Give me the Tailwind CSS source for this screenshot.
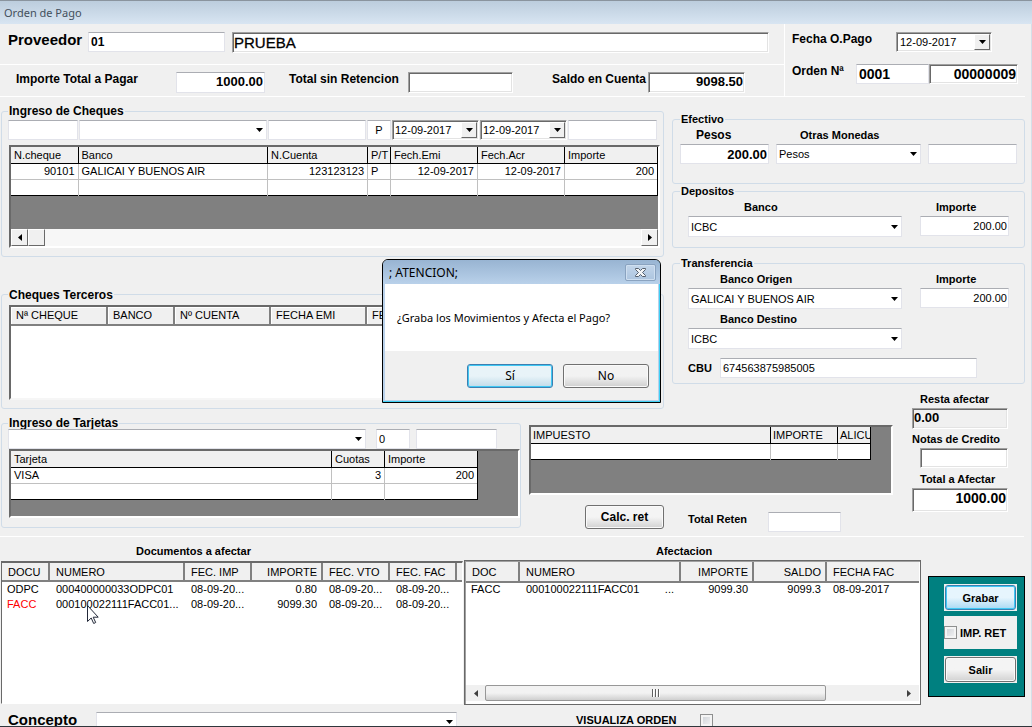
<!DOCTYPE html>
<html lang="es">
<head>
<meta charset="utf-8">
<meta name="viewport" content="width=device-width, initial-scale=1">
<title>Orden de Pago</title>
<script src="https://cdn.jsdelivr.net/npm/@tailwindcss/browser@4"></script>
</head>
<body class="relative flex h-screen flex-col overflow-hidden bg-[#f0f0f0] font-['Liberation_Sans',Arial,sans-serif] text-[11px] leading-3 text-black">

<header class="h-6 shrink-0 border-t border-[#8a949e] bg-linear-to-b from-[#bccddd] to-[#d8e5f2] pl-1 font-['Noto_Sans',sans-serif]">
  <h1 class="text-[11px] leading-6 text-[#44505c]">Orden de Pago</h1>
</header>

<main class="flex min-h-0 flex-1 flex-col border-r border-[#d5dfe8]">

  <!-- Encabezado de la orden -->
  <section class="mr-1.5 flex h-[73px] shrink-0 border-b border-white text-xs font-bold">
    <div class="flex flex-1 flex-col border-r border-white">
      <div class="flex h-[41px] items-start border-b border-white pt-2 pl-2">
        <label for="prov" class="w-20 text-[15px] leading-4">Proveedor</label>
        <input id="prov" value="01" class="h-5 w-[137px] border border-[#e2e3ea] border-t-[#abadb3] bg-white px-0.5">
        <input aria-label="Nombre del proveedor" value="PRUEBA" class="mr-[15px] ml-[7px] h-[21px] min-w-0 flex-1 border border-t-[#a0a0a0] border-r-white border-b-white border-l-[#a0a0a0] bg-white px-px text-[15px] font-normal shadow-[inset_1px_1px_#696969,inset_-1px_-1px_#e3e3e3] [-webkit-text-stroke:0.3px]">
      </div>
      <div class="flex items-start pt-[7px] pl-4">
        <label for="total" class="w-40 leading-[14px]">Importe Total a Pagar</label>
        <input id="total" value="1000.00" class="h-[21px] w-[89px] border border-[#e2e3ea] border-t-[#abadb3] bg-white px-px pb-0.5 text-right text-[13px]">
        <label for="sinret" class="ml-6 w-[119px] leading-[14px]">Total sin Retencion</label>
        <input id="sinret" class="h-[21px] w-[105px] border border-t-[#a0a0a0] border-r-white border-b-white border-l-[#a0a0a0] bg-white px-0.5 shadow-[inset_1px_1px_#696969,inset_-1px_-1px_#e3e3e3]">
        <label for="saldo" class="ml-[39px] w-24 leading-[14px]">Saldo en Cuenta</label>
        <input id="saldo" value="9098.50" class="h-[21px] w-[97px] border border-t-[#a0a0a0] border-r-white border-b-white border-l-[#a0a0a0] bg-white px-px pb-0.5 text-right text-[13px] shadow-[inset_1px_1px_#696969,inset_-1px_-1px_#e3e3e3]">
      </div>
    </div>
    <div class="w-60 pt-2 pr-[7px] pl-[7px]">
      <div class="flex h-8 items-start">
        <label for="fecha" class="w-[104px] leading-[14px]">Fecha O.Pago</label>
        <div class="flex h-5 w-24 border border-t-[#a0a0a0] border-r-white border-b-white border-l-[#a0a0a0] bg-white p-px shadow-[inset_1px_1px_#696969,inset_-1px_-1px_#e3e3e3]">
          <input id="fecha" value="12-09-2017" class="min-w-0 flex-1 pl-0.5 text-[11px] font-normal">
          <button aria-label="Abrir calendario" class="flex w-4 items-center justify-center border border-white border-r-[#696969] border-b-[#696969] bg-[#f0f0f0]"><svg class="h-1 w-[7px]" viewBox="0 0 7 4"><path d="M0 0h7L3.500 4z"/></svg></button>
        </div>
      </div>
      <div class="flex items-start">
        <label for="ord" class="w-16 leading-[14px]">Orden Nª</label>
        <input id="ord" value="0001" class="h-5 w-[73px] border border-[#e2e3ea] border-t-[#abadb3] bg-white px-0.5 text-sm">
        <input aria-label="Número de orden" value="00000009" class="h-5 min-w-0 flex-1 border border-t-[#a0a0a0] border-r-white border-b-white border-l-[#a0a0a0] bg-white px-px text-right text-sm shadow-[inset_1px_1px_#696969,inset_-1px_-1px_#e3e3e3]">
      </div>
    </div>
  </section>

  <!-- Medios de pago -->
  <section class="flex h-[312px] shrink-0 pr-1.5">
    <div class="mr-2 min-w-0 flex-1 pt-2 pl-px">
      <fieldset class="min-w-0 rounded-[3px] border border-[#d0dce8] px-1.5 pb-2">
        <legend class="px-px text-xs leading-3 font-bold">Ingreso de Cheques</legend>
        <div class="flex gap-px pt-[3px]">
          <input aria-label="N.cheque" class="h-5 w-[70px] border border-[#e2e3ea] border-t-[#abadb3] bg-white px-0.5">
          <div class="relative min-w-0 flex-1">
            <select aria-label="Banco del cheque" class="h-5 w-full appearance-none border border-[#e2e3ea] border-t-[#abadb3] bg-white px-0.5"><option></option></select>
            <svg class="pointer-events-none absolute top-2 right-1 h-1 w-[7px]" viewBox="0 0 7 4"><path d="M0 0h7L3.500 4z"/></svg>
          </div>
          <input aria-label="N.Cuenta" class="h-5 w-[98px] border border-[#e2e3ea] border-t-[#abadb3] bg-white px-0.5">
          <input aria-label="P/T" value="P" class="h-5 w-6 border border-[#e2e3ea] border-t-[#abadb3] bg-white text-center">
          <div class="flex h-5 w-[87px] border border-t-[#a0a0a0] border-r-white border-b-white border-l-[#a0a0a0] bg-white p-px shadow-[inset_1px_1px_#696969,inset_-1px_-1px_#e3e3e3]">
            <input aria-label="Fecha de emisión" value="12-09-2017" class="min-w-0 flex-1 pl-px">
            <button aria-label="Abrir calendario de emisión" class="flex w-4 items-center justify-center border border-white border-r-[#696969] border-b-[#696969] bg-[#f0f0f0]"><svg class="h-1 w-[7px]" viewBox="0 0 7 4"><path d="M0 0h7L3.500 4z"/></svg></button>
          </div>
          <div class="flex h-5 w-[87px] border border-t-[#a0a0a0] border-r-white border-b-white border-l-[#a0a0a0] bg-white p-px shadow-[inset_1px_1px_#696969,inset_-1px_-1px_#e3e3e3]">
            <input aria-label="Fecha de acreditación" value="12-09-2017" class="min-w-0 flex-1 pl-px">
            <button aria-label="Abrir calendario de acreditación" class="flex w-4 items-center justify-center border border-white border-r-[#696969] border-b-[#696969] bg-[#f0f0f0]"><svg class="h-1 w-[7px]" viewBox="0 0 7 4"><path d="M0 0h7L3.500 4z"/></svg></button>
          </div>
          <input aria-label="Importe del cheque" class="h-5 w-[89px] border border-[#e2e3ea] border-t-[#abadb3] bg-white px-0.5">
        </div>
        <div class="mt-[5px] -mr-[3px] ml-px border-2 border-[#696969] border-r-white border-b-white bg-[#808080]">
          <table class="w-full table-fixed border-collapse bg-white text-left">
            <colgroup><col class="w-[67px]"><col><col class="w-[100px]"><col class="w-[23px]"><col class="w-[87px]"><col class="w-[87px]"><col class="w-[93px]"></colgroup>
            <thead class="bg-[#f0f0f0]">
              <tr class="h-4 border-b border-black [&>th]:overflow-hidden [&>th]:border-r [&>th]:border-black [&>th]:pl-[3px] [&>th]:font-normal [&>th]:whitespace-nowrap">
                <th>N.cheque</th><th>Banco</th><th>N.Cuenta</th><th>P/T</th><th>Fech.Emi</th><th>Fech.Acr</th><th>Importe</th>
              </tr>
            </thead>
            <tbody class="[&_td]:border-r [&_td]:border-[#c0c0c0] [&_td]:px-[3px] [&_td]:whitespace-nowrap [&_td:last-child]:border-black">
              <tr class="h-4 border-b border-[#c0c0c0]"><td class="text-right">90101</td><td>GALICAI Y BUENOS AIR</td><td class="text-right">123123123</td><td>P</td><td class="text-right">12-09-2017</td><td class="text-right">12-09-2017</td><td class="text-right">200</td></tr>
              <tr class="h-4 border-b border-black"><td></td><td></td><td></td><td></td><td></td><td></td><td></td></tr>
            </tbody>
          </table>
          <div class="mt-[33px] flex h-[17px] justify-between bg-[#f7f7f7]">
            <div class="flex">
              <button aria-label="Desplazar a la izquierda" class="flex w-[17px] items-center justify-center border border-white border-r-[#696969] border-b-[#696969] bg-[#f0f0f0]"><svg class="h-[7px] w-1" viewBox="0 0 4 7"><path d="M4 0v7L0 3.500z"/></svg></button>
              <div class="w-[17px] border border-white border-r-[#696969] border-b-[#696969] bg-[#f0f0f0]"></div>
            </div>
            <button aria-label="Desplazar a la derecha" class="flex w-[17px] items-center justify-center border border-white border-r-[#696969] border-b-[#696969] bg-[#f0f0f0]"><svg class="h-[7px] w-1" viewBox="0 0 4 7"><path d="M0 0v7l4-3.500z"/></svg></button>
          </div>
        </div>
      </fieldset>

      <fieldset class="mt-8 min-w-0 rounded-[3px] border border-[#d0dce8] px-1.5 pb-2">
        <legend class="px-px text-xs leading-3 font-bold">Cheques Terceros</legend>
        <div class="mt-1 ml-px h-[95px] border-2 border-t-[#696969] border-r-white border-b-[#f6f6f6] border-l-[#696969] bg-white">
          <table class="w-full table-fixed border-collapse bg-[#f0f0f0] text-left">
            <colgroup><col class="w-24"><col class="w-[67px]"><col class="w-24"><col class="w-24"><col></colgroup>
            <thead><tr class="h-[18px] border-b-2 border-[#808080] [&>th]:border-r-2 [&>th]:border-[#808080] [&>th]:pl-[5px] [&>th]:font-normal [&>th]:shadow-[inset_1px_1px_white]">
              <th>Nª CHEQUE</th><th>BANCO</th><th>Nº CUENTA</th><th>FECHA EMI</th><th>FE</th>
            </tr></thead>
          </table>
        </div>
      </fieldset>
    </div>

    <div class="w-[353px] shrink-0 pt-4">
      <fieldset class="min-w-0 rounded-[3px] border border-[#d0dce8] pt-1 pr-[7px] pb-[19px] pl-[7px]">
        <legend class="px-px text-[11px] leading-3 font-bold">Efectivo</legend>
        <div class="flex gap-[7px]">
          <div class="w-[89px]">
            <label for="pesos" class="mb-[3px] ml-4 block text-xs leading-3 font-bold">Pesos</label>
            <input id="pesos" value="200.00" class="block h-5 w-full border border-[#e2e3ea] border-t-[#abadb3] bg-white px-px text-right text-[13px] font-bold">
          </div>
          <div class="relative min-w-0 flex-1">
            <label for="otras" class="mb-[3px] ml-6 block text-[11px] leading-3 font-bold">Otras Monedas</label>
            <select id="otras" class="block h-5 w-full appearance-none border border-[#e2e3ea] border-t-[#abadb3] bg-white px-0.5"><option>Pesos</option></select>
            <svg class="pointer-events-none absolute right-1 bottom-2 h-1 w-[7px]" viewBox="0 0 7 4"><path d="M0 0h7L3.500 4z"/></svg>
          </div>
          <input aria-label="Importe en otra moneda" class="mt-[15px] h-5 w-[89px] border border-[#e2e3ea] border-t-[#abadb3] bg-white px-0.5">
        </div>
      </fieldset>

      <fieldset class="mt-px min-w-0 rounded-[3px] border border-[#d0dce8] pt-1 pr-[15px] pb-[10px] pl-[15px]">
        <legend class="-ml-2 px-px text-[11px] leading-3 font-bold">Depositos</legend>
        <div class="flex justify-between gap-[18px]">
          <div class="relative min-w-0 flex-1">
            <label for="depb" class="mb-[3px] ml-14 block text-[11px] leading-3 font-bold">Banco</label>
            <select id="depb" class="block h-[21px] w-full appearance-none border border-[#e2e3ea] border-t-[#abadb3] bg-white px-0.5"><option>ICBC</option></select>
            <svg class="pointer-events-none absolute right-1 bottom-2 h-1 w-[7px]" viewBox="0 0 7 4"><path d="M0 0h7L3.500 4z"/></svg>
          </div>
          <div class="w-[89px]">
            <label for="depi" class="mb-[3px] ml-4 block text-[11px] leading-3 font-bold">Importe</label>
            <input id="depi" value="200.00" class="block h-5 w-full border border-[#e2e3ea] border-t-[#abadb3] bg-white px-px text-right">
          </div>
        </div>
      </fieldset>

      <fieldset class="mt-[9px] min-w-0 rounded-[3px] border border-[#d0dce8] pt-1 pr-[15px] pb-[5px] pl-[15px]">
        <legend class="-ml-2 px-px text-[11px] leading-3 font-bold">Transferencia</legend>
        <div class="flex justify-between gap-[18px]">
          <div class="min-w-0 flex-1">
            <div class="relative">
              <label for="orig" class="mb-[3px] ml-8 block text-[11px] leading-3 font-bold">Banco Origen</label>
              <select id="orig" class="block h-[21px] w-full appearance-none border border-[#e2e3ea] border-t-[#abadb3] bg-white px-0.5"><option>GALICAI Y BUENOS AIR</option></select>
              <svg class="pointer-events-none absolute right-1 bottom-2 h-1 w-[7px]" viewBox="0 0 7 4"><path d="M0 0h7L3.500 4z"/></svg>
            </div>
            <div class="relative mt-1">
              <label for="dest" class="mb-[3px] ml-8 block text-[11px] leading-3 font-bold">Banco Destino</label>
              <select id="dest" class="block h-[21px] w-full appearance-none border border-[#e2e3ea] border-t-[#abadb3] bg-white px-0.5"><option>ICBC</option></select>
              <svg class="pointer-events-none absolute right-1 bottom-2 h-1 w-[7px]" viewBox="0 0 7 4"><path d="M0 0h7L3.500 4z"/></svg>
            </div>
          </div>
          <div class="w-[89px]">
            <label for="tri" class="mb-[3px] ml-4 block text-[11px] leading-3 font-bold">Importe</label>
            <input id="tri" value="200.00" class="block h-5 w-full border border-[#e2e3ea] border-t-[#abadb3] bg-white px-px text-right">
          </div>
        </div>
        <div class="mt-[9px] flex items-center">
          <label for="cbu" class="w-8 text-[11px] font-bold">CBU</label>
          <input id="cbu" value="674563875985005" class="mr-8 h-5 min-w-0 flex-1 border border-[#e2e3ea] border-t-[#abadb3] bg-white px-0.5">
        </div>
      </fieldset>
    </div>
  </section>

  <!-- Tarjetas, impuestos y totales -->
  <section class="mr-[7px] flex h-32 shrink-0 border-b border-white pl-px">
    <fieldset class="mt-2 mb-2 min-w-0 flex-1 rounded-[3px] border border-[#d0dce8] pl-1.5">
      <legend class="px-px text-xs leading-3 font-bold">Ingreso de Tarjetas</legend>
      <div class="flex">
        <div class="relative min-w-0 flex-1">
          <select aria-label="Tarjeta" class="block h-5 w-full appearance-none border border-[#e2e3ea] border-t-[#abadb3] bg-white px-0.5"><option></option></select>
          <svg class="pointer-events-none absolute top-2 right-1 h-1 w-[7px]" viewBox="0 0 7 4"><path d="M0 0h7L3.500 4z"/></svg>
        </div>
        <input aria-label="Cuotas" value="0" class="ml-[10px] h-5 w-[34px] border border-[#e2e3ea] border-t-[#abadb3] bg-white px-0.5">
        <input aria-label="Importe de la tarjeta" class="mr-[23px] ml-1.5 h-5 w-[81px] border border-[#e2e3ea] border-t-[#abadb3] bg-white px-0.5">
      </div>
      <div class="ml-px h-[69px] border-2 border-[#696969] border-r-white border-b-white bg-[#808080] pr-10">
        <table class="w-full table-fixed border-collapse bg-white text-left">
          <colgroup><col><col class="w-[53px]"><col class="w-[93px]"></colgroup>
          <thead class="bg-[#f0f0f0]">
            <tr class="h-4 border-b border-black [&>th]:border-r [&>th]:border-black [&>th]:pl-[3px] [&>th]:font-normal"><th>Tarjeta</th><th>Cuotas</th><th>Importe</th></tr>
          </thead>
          <tbody class="[&_td]:border-r [&_td]:border-[#c0c0c0] [&_td]:px-[3px] [&_td:last-child]:border-black">
            <tr class="h-4 border-b border-[#c0c0c0]"><td>VISA</td><td class="text-right">3</td><td class="text-right">200</td></tr>
            <tr class="h-4 border-b border-black"><td></td><td></td><td></td></tr>
          </tbody>
        </table>
      </div>
    </fieldset>

    <div class="mt-4 ml-2 w-[364px]">
      <div class="h-[70px] border-2 border-[#696969] border-r-white border-b-white bg-[#808080] pr-5">
        <table class="w-full table-fixed border-collapse bg-white text-left">
          <colgroup><col><col class="w-[67px]"><col class="w-[33px]"></colgroup>
          <thead class="bg-[#f0f0f0]">
            <tr class="h-4 border-b border-black [&>th]:overflow-hidden [&>th]:border-r [&>th]:border-black [&>th]:pl-0.5 [&>th]:font-normal"><th>IMPUESTO</th><th>IMPORTE</th><th>ALICU</th></tr>
          </thead>
          <tbody class="[&_td]:border-r [&_td]:border-[#c0c0c0] [&_td:last-child]:border-black">
            <tr class="h-4 border-b border-black"><td></td><td></td><td></td></tr>
          </tbody>
        </table>
      </div>
      <div class="mt-[10px] flex items-start pl-14">
        <button class="h-6 w-[79px] rounded-[3px] border border-[#707070] bg-linear-to-b from-[#f4f4f4] from-50% to-[#d2d2d2] text-xs font-bold shadow-[inset_0_0_0_1px_#fafafa]">Calc. ret</button>
        <label for="reten" class="mt-2 ml-6 w-20 text-[11px] leading-3 font-bold whitespace-nowrap">Total Reten</label>
        <input id="reten" class="mt-[7px] h-5 w-[73px] border border-[#e2e3ea] border-t-[#abadb3] bg-white px-0.5">
      </div>
    </div>

    <div class="-mt-4 mr-4 ml-[19px] flex w-24 flex-col font-bold">
      <label for="resta" class="ml-2 leading-3">Resta afectar</label>
      <input id="resta" value="0.00" class="mt-[3px] h-[21px] w-full border border-t-[#a0a0a0] border-r-white border-b-white border-l-[#a0a0a0] bg-[#f0f0f0] px-px pb-0.5 text-[13px] shadow-[inset_1px_1px_#696969,inset_-1px_-1px_#e3e3e3]">
      <label for="notas" class="mt-1 leading-3 whitespace-nowrap">Notas de Credito</label>
      <input id="notas" class="mt-[3px] ml-2 h-5 border border-t-[#a0a0a0] border-r-white border-b-white border-l-[#a0a0a0] bg-white px-px shadow-[inset_1px_1px_#696969,inset_-1px_-1px_#e3e3e3]">
      <label for="afec" class="mt-[5px] ml-2 leading-3 whitespace-nowrap">Total a Afectar</label>
      <input id="afec" value="1000.00" class="mt-[3px] h-6 w-full border border-t-[#a0a0a0] border-r-white border-b-white border-l-[#a0a0a0] bg-white px-px pb-1 text-right text-sm shadow-[inset_1px_1px_#696969,inset_-1px_-1px_#e3e3e3]">
    </div>
  </section>

  <!-- Documentos -->
  <section class="flex h-[168px] shrink-0 pt-2 pr-1.5 pl-px">
    <div class="min-w-0 flex-1">
      <h2 class="pl-[135px] text-[11px] leading-3 font-bold">Documentos a afectar</h2>
      <div class="mt-1 h-[143px] overflow-hidden border border-t-2 border-[#696969] border-r-white border-b-white bg-white">
        <table class="w-full table-fixed border-collapse text-left">
          <colgroup><col class="w-[47px]"><col><col class="w-[67px]"><col class="w-[71px]"><col class="w-[67px]"><col class="w-[67px]"><col class="w-[6px]"></colgroup>
          <thead class="bg-[#f0f0f0]">
            <tr class="h-[18px] border-b-2 border-[#808080] [&>th]:border-r-2 [&>th]:border-[#808080] [&>th]:pl-1.5 [&>th]:font-normal [&>th]:whitespace-nowrap [&>th:last-child]:border-r-0">
              <th>DOCU</th><th>NUMERO</th><th>FEC. IMP</th><th class="pr-1 text-right">IMPORTE</th><th>FEC. VTO</th><th>FEC. FAC</th><th></th>
            </tr>
          </thead>
          <tbody class="[&_td]:h-[15px] [&_td]:pl-[7px] [&_td]:whitespace-nowrap [&_td:first-child]:pl-[5px]">
            <tr><td>ODPC</td><td>000400000033ODPC01</td><td>08-09-20...</td><td class="pr-[5px] text-right">0.80</td><td>08-09-20...</td><td>08-09-20...</td><td></td></tr>
            <tr><td class="text-[#ff0000]">FACC</td><td>000100022111FACC01...</td><td>08-09-20...</td><td class="pr-[5px] text-right">9099.30</td><td>08-09-20...</td><td>08-09-20...</td><td></td></tr>
          </tbody>
        </table>
      </div>
    </div>
    <div class="ml-px w-[457px]">
      <h2 class="pl-48 text-[11px] leading-3 font-bold">Afectacion</h2>
      <div class="mt-[3px] flex h-[145px] flex-col border border-[#696969] bg-white p-px shadow-[inset_1px_1px_#a0a0a0]">
        <table class="w-full table-fixed border-collapse text-left">
          <colgroup><col class="w-[53px]"><col><col class="w-[73px]"><col class="w-[73px]"><col class="w-[93px]"></colgroup>
          <thead class="bg-[#f0f0f0]">
            <tr class="h-5 border-b-2 border-[#808080] [&>th]:border-r-2 [&>th]:border-[#808080] [&>th]:pl-1.5 [&>th]:font-normal [&>th:last-child]:border-r-0">
              <th>DOC</th><th>NUMERO</th><th class="pr-1 text-right">IMPORTE</th><th class="pr-1 text-right">SALDO</th><th>FECHA FAC</th>
            </tr>
          </thead>
          <tbody class="[&_td]:h-3 [&_td]:pl-[7px] [&_td:first-child]:pl-[5px]">
            <tr><td>FACC</td><td><div class="flex justify-between pr-1.5"><span>000100022111FACC01</span><span>...</span></div></td><td class="pr-[5px] text-right">9099.30</td><td class="pr-[5px] text-right">9099.3</td><td>08-09-2017</td></tr>
          </tbody>
        </table>
        <div class="mt-auto mb-0.5 flex h-4 bg-[#f0f0f0]">
          <button aria-label="Desplazar a la izquierda" class="flex w-[19px] items-center justify-center"><svg class="h-[7px] w-1" viewBox="0 0 4 7"><path fill="#404040" d="M4 0v7L0 3.500z"/></svg></button>
          <div class="flex flex-1 items-center justify-center gap-px rounded-[2px] border border-[#979797] bg-linear-to-b from-[#f2f2f2] from-50% to-[#cfcfcf]"><i class="h-2 w-0.5 border-r border-white bg-[#606060]"></i><i class="h-2 w-0.5 border-r border-white bg-[#606060]"></i><i class="h-2 w-0.5 border-r border-white bg-[#606060]"></i></div>
          <button aria-label="Desplazar a la derecha" class="flex w-[93px] items-center justify-end pr-2"><svg class="h-[7px] w-1" viewBox="0 0 4 7"><path fill="#404040" d="M0 0v7l4-3.500z"/></svg></button>
        </div>
      </div>
    </div>
    <div class="mt-[31px] ml-[7px] flex h-[121px] w-[97px] flex-col border border-black bg-[#008080] pt-[7px] pr-[7px] pl-[15px]">
      <div class="h-[27px] bg-[#f0f0f0] p-px"><button class="size-full rounded-[3px] border border-[#3c7fb1] bg-linear-to-b from-[#e6f5fd] from-50% to-[#a9d9f3] text-[11px] font-bold shadow-[inset_0_0_0_1px_#3fc8f4]">Grabar</button></div>
      <label class="mt-[5px] flex h-[33px] items-center gap-[3px] bg-[#f0f0f0] text-[11px] font-bold whitespace-nowrap"><input type="checkbox" class="size-[13px] appearance-none border border-[#8e8f8f] bg-linear-to-br from-[#cbcfd5] to-[#f6f6f6] shadow-[inset_0_0_0_2px_#f4f4f4]">IMP. RET</label>
      <div class="mt-[7px] h-[27px] bg-[#f0f0f0] p-px"><button class="size-full rounded-[3px] border border-[#707070] bg-linear-to-b from-[#f4f4f4] from-50% to-[#d2d2d2] text-[11px] font-bold shadow-[inset_0_0_0_1px_#fafafa]">Salir</button></div>
    </div>
  </section>

  <section class="flex items-start pt-[7px] pl-2 font-bold">
    <label for="conc" class="w-[88px] text-[15px] leading-4">Concepto</label>
    <div class="relative min-w-0 flex-1">
      <select id="conc" class="block h-[21px] w-full appearance-none border border-[#e2e3ea] border-t-[#abadb3] bg-white px-0.5"><option></option></select>
      <svg class="pointer-events-none absolute top-2 right-1 h-1 w-[7px]" viewBox="0 0 7 4"><path d="M0 0h7L3.500 4z"/></svg>
    </div>
    <label for="vis" class="mt-0.5 ml-[119px] w-[124px] leading-3">VISUALIZA ORDEN</label>
    <input id="vis" type="checkbox" class="mt-0.5 mr-[318px] size-[13px] appearance-none border border-[#8e8f8f] bg-linear-to-br from-[#cbcfd5] to-[#f6f6f6] shadow-[inset_0_0_0_2px_#f4f4f4]">
  </section>
</main>
<div class="absolute inset-x-0 bottom-0 h-px bg-[#30363c]"></div>

<!-- Cuadro de confirmación -->
<div role="dialog" aria-labelledby="dlg" class="absolute top-[259px] left-[382px] w-[279px] rounded-t-md border border-black bg-[#b9d1ea] px-0.5 pb-0.5 font-['Noto_Sans',sans-serif] text-xs shadow-[inset_-1px_-1px_#3fd0f5]">
  <div class="-mx-0.5 flex h-6 items-start justify-between rounded-t-[5px] bg-linear-to-b from-[#98b4d2] to-[#b9d1ea] pr-1 pl-1.5">
    <h2 id="dlg" class="text-xs leading-[26px]">; ATENCION;</h2>
    <button aria-label="Cerrar" class="mt-1 flex h-[17px] w-[31px] items-center justify-center rounded-[2px] border border-[#8aa3c0] bg-linear-to-b from-[#c2d5ea] to-[#adc5df] shadow-[inset_0_0_0_1px_#cfdff0]"><svg class="h-[9px] w-[11px]" viewBox="0 0 11 9"><path d="M.5.5h3l2 2 2-2h3v1L7.500 4.500l3 3v1h-3l-2-2-2 2h-3v-1l3-3-3-3z" fill="#f4f6f8" stroke="#555f6c"/></svg></button>
  </div>
  <p class="h-[67px] bg-white pl-3 text-[11px] leading-[67px] whitespace-nowrap">¿Graba los Movimientos y Afecta el Pago?</p>
  <div class="flex h-[49px] justify-end gap-[10px] bg-[#f0f0f0] pt-[13px] pr-[9px]">
    <button class="h-6 w-[86px] rounded-[3px] border border-[#3c7fb1] bg-linear-to-b from-[#e8f3f8] from-50% to-[#c0dbe9] shadow-[inset_0_0_0_1px_#3fc8f4]">Sí</button>
    <button class="h-6 w-[86px] rounded-[3px] border border-[#707070] bg-linear-to-b from-[#f2f2f2] from-50% to-[#cfcfcf] shadow-[inset_0_0_0_1px_#fafafa]">No</button>
  </div>
</div>

<svg class="pointer-events-none absolute top-[605px] left-[87px] h-[19px] w-3" viewBox="0 0 12 19"><path d="M.5.5v16l3.700-3.500 2.500 5.500 2-1-2.500-5.300h5z" fill="#fff" stroke="#222838"/></svg>
</body>
</html>
